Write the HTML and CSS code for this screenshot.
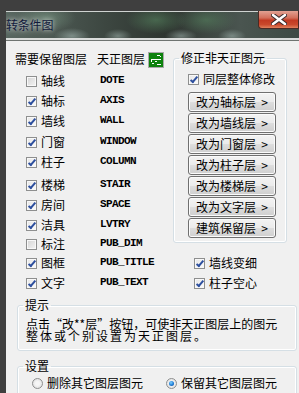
FILE: index.html
```html
<!DOCTYPE html>
<html lang="zh-CN">
<head>
    <meta charset="UTF-8">
    <title>转条件图</title>
    <link rel="stylesheet" href="styles.css">
</head>
<body>
    <div class="window">
        <div class="titlebar">
            <span class="title">转条件图</span>
            <span class="close">
                <svg width="16" height="11" viewBox="0 0 16 11">
                    <path d="M2 1 L14 10 M14 1 L2 10" stroke="#3a2a2a" stroke-width="4.5" stroke-linecap="round"/>
                    <path d="M2 1 L14 10 M14 1 L2 10" stroke="#ffffff" stroke-width="2.5" stroke-linecap="round"/>
                </svg>
            </span>
        </div>

        <div class="content">
            <div class="top">
                <!-- 左侧：需要保留的图层 -->
                <div class="layers">
                    <div class="head">
                        <span>需要保留图层</span>
                        <span class="tz">天正图层</span>
                        <svg class="tz-icon" width="16" height="16" viewBox="0 0 16 16">
                            <rect x="0.5" y="0.5" width="15" height="15" fill="#0d820d" stroke="#a9a9a9"/>
                            <rect x="9" y="3" width="3" height="1" fill="#fff"/>
                            <rect x="12" y="4" width="1" height="1" fill="#fff"/>
                            <rect x="3" y="7" width="10" height="1" fill="#fff"/>
                            <rect x="3" y="8" width="1" height="2" fill="#fff"/>
                            <rect x="7" y="9" width="2" height="1" fill="#fff"/>
                            <rect x="4" y="11" width="2" height="1" fill="#fff"/>
                            <rect x="9" y="12" width="4" height="1" fill="#fff"/>
                        </svg>
                    </div>
                    <div class="row"><span class="cb"></span><span class="lbl">轴线</span><span class="code">DOTE</span></div>
                    <div class="row"><span class="cb on"></span><span class="lbl">轴标</span><span class="code">AXIS</span></div>
                    <div class="row"><span class="cb on"></span><span class="lbl">墙线</span><span class="code">WALL</span></div>
                    <div class="row gap1"><span class="cb on"></span><span class="lbl">门窗</span><span class="code">WINDOW</span></div>
                    <div class="row"><span class="cb on"></span><span class="lbl">柱子</span><span class="code">COLUMN</span></div>
                    <div class="row gap3"><span class="cb on"></span><span class="lbl">楼梯</span><span class="code">STAIR</span></div>
                    <div class="row"><span class="cb on"></span><span class="lbl">房间</span><span class="code">SPACE</span></div>
                    <div class="row tight"><span class="cb on"></span><span class="lbl">洁具</span><span class="code">LVTRY</span></div>
                    <div class="row tight"><span class="cb"></span><span class="lbl">标注</span><span class="code">PUB_DIM</span></div>
                    <div class="row"><span class="cb on"></span><span class="lbl">图框</span><span class="code">PUB_TITLE</span></div>
                    <div class="row"><span class="cb on"></span><span class="lbl">文字</span><span class="code">PUB_TEXT</span></div>
                </div>

                <!-- 右侧：修正非天正图元 -->
                <div class="side">
                    <fieldset class="group fix">
                        <legend>修正非天正图元</legend>
                        <div class="row opt"><span class="cb on"></span><span>同层整体修改</span></div>
                        <div class="buttons">
                            <div class="btn"><span>改为轴标层</span><span>&gt;</span></div>
                            <div class="btn"><span>改为墙线层</span><span>&gt;</span></div>
                            <div class="btn"><span>改为门窗层</span><span>&gt;</span></div>
                            <div class="btn"><span>改为柱子层</span><span>&gt;</span></div>
                            <div class="btn"><span>改为楼梯层</span><span>&gt;</span></div>
                            <div class="btn"><span>改为文字层</span><span>&gt;</span></div>
                            <div class="btn"><span>建筑保留层</span><span>&gt;</span></div>
                        </div>
                    </fieldset>
                    <div class="extra">
                        <div class="row"><span class="cb on"></span><span class="lbl">墙线变细</span></div>
                        <div class="row"><span class="cb on"></span><span class="lbl">柱子空心</span></div>
                    </div>
                </div>
            </div>

            <fieldset class="group tip">
                <legend>提示</legend>
                <p>点击“改**层”按钮，可使非天正图层上的图元</p>
                <p class="wide">整体或个别设置为天正图层。</p>
            </fieldset>

            <fieldset class="group set">
                <legend>设置</legend>
                <div class="radios">
                    <div class="radio-item first"><span class="rb"></span><span>删除其它图层图元</span></div>
                    <div class="radio-item"><span class="rb on"></span><span>保留其它图层图元</span></div>
                </div>
            </fieldset>
        </div>
    </div>
</body>
</html>
```

FILE: styles.css
```css
html, body {
    margin: 0;
    height: 393px;
    overflow: hidden;
}
body {
    background: #3f3f3f;
    font-family: "Noto Sans CJK SC", "Liberation Sans", sans-serif;
    font-size: 12px;
    color: #000;
}
.window {
    margin: 11px 0 0 6px;
    width: 293px;
    height: 382px;
    overflow: hidden;
    background: #f0f0f0;
}

/* 标题栏 */
.titlebar {
    height: 26px;
    display: flex;
    align-items: flex-start;
    border-top: 1px solid #cfd3d1;
    border-bottom: 2px solid #dadcdb;
    box-shadow: 0 1px 0 #6f7471;
    margin-bottom: 1px;
    background:
        radial-gradient(ellipse 18px 8px at 66px 24px, rgba(170,190,185,0.55), transparent),
        radial-gradient(ellipse 14px 7px at 112px 24px, rgba(170,190,185,0.5), transparent),
        radial-gradient(ellipse 16px 7px at 175px 24px, rgba(170,190,185,0.5), transparent),
        radial-gradient(ellipse 14px 7px at 226px 24px, rgba(170,190,185,0.5), transparent),
        radial-gradient(ellipse 30px 14px at 40px 6px, rgba(120,150,130,0.6), transparent),
        radial-gradient(ellipse 30px 14px at 150px 8px, rgba(90,140,100,0.55), transparent),
        radial-gradient(ellipse 30px 14px at 200px 8px, rgba(90,140,100,0.5), transparent),
        linear-gradient(to right, #586660, #3c4640 35%, #2e3530 55%, #4a5550 80%, #3e4a44);
}
.title {
    line-height: 25px;
    color: #121a3c;
    text-shadow: 0 0 4px rgba(255,255,255,0.7), 0 0 8px rgba(255,255,255,0.5);
    letter-spacing: -0.2px;
}
.close {
    margin-left: auto;
    width: 39px;
    height: 17px;
    margin-top: -1px;
    border: 1px solid #4a2a24;
    border-top: none;
    border-radius: 0 0 0 4px;
    background: linear-gradient(to bottom, #e2a192 0%, #d3705c 40%, #c23a22 55%, #c9492c 80%, #e0805c 100%);
    display: flex;
    align-items: center;
    justify-content: center;
}

/* 内容区 */
.content {
    padding: 10px 0 0 9px;
}
.top {
    display: grid;
    grid-template-columns: 158px 114px;
}
.head {
    height: 16px;
    line-height: 16px;
    display: flex;
    align-items: flex-start;
}
.tz {
    margin-left: 10px;
}
.tz-icon {
    margin: 1px 0 0 3px;
}
.row {
    height: 20px;
    display: flex;
    align-items: flex-start;
    line-height: 20px;
}
.layers .head + .row {
    margin-top: 4px;
}
.layers .row .cb {
    margin-left: 11px;
}
.row.gap1 { margin-top: 1px; }
.row.gap3 { margin-top: 3px; }
.row.tight { height: 19px; }
.lbl {
    width: 59px;
}
.code {
    font-family: "Liberation Mono", monospace;
    font-weight: bold;
    font-size: 11px;
    letter-spacing: -0.6px;
    line-height: 18px;
}

/* 复选框 */
.cb {
    width: 11px;
    height: 11px;
    margin: 5px 4px 0 0;
    box-sizing: border-box;
    border: 1px solid #8e8f8f;
    background: linear-gradient(135deg, #d4d4d4, #f4f4f4);
    box-shadow: inset 0 0 0 1px #f8f8f8;
    position: relative;
    flex-shrink: 0;
}
.cb.on {
    background: linear-gradient(135deg, #e6e6e6, #fbfbfb);
}
.cb.on::after {
    content: "";
    position: absolute;
    left: 3px;
    top: 0px;
    width: 2px;
    height: 6px;
    border-right: 2px solid #2d4f9e;
    border-bottom: 2px solid #2d4f9e;
    transform: rotate(40deg);
}

/* 分组框 */
.group {
    box-sizing: border-box;
    margin: 0;
    border: 1px solid #d5dfe5;
    border-radius: 3px;
    box-shadow: inset 0 0 0 1px #fff;
    padding: 0 0 0 5px;
    min-width: 0;
}
.group legend {
    padding: 0 2px;
    line-height: 14px;
}
.fix {
    padding: 4px 0 3px 5px;
}
.fix .opt .cb {
    margin-left: 9px;
}
.buttons {
    margin: 3px 0 0 9px;
}
.btn {
    width: 88px;
    height: 20px;
    box-sizing: border-box;
    margin-bottom: 1px;
    border: 1px solid #707070;
    border-radius: 3px;
    background: linear-gradient(to bottom, #f3f3f3 0%, #ebebeb 48%, #dddddd 52%, #cfcfcf 100%);
    box-shadow: inset 0 0 0 1px #fbfbfb;
    display: flex;
    justify-content: space-between;
    align-items: center;
    padding: 0 7px 0 7px;
    line-height: 18px;
}
.extra {
    margin-top: 10px;
}
.extra .row .cb {
    margin-left: 21px;
}

.tip {
    width: 280px;
    margin: 5px 0 0 2px;
    padding: 6px 0 8px 5px;
}
.tip p {
    margin: 0 0 0 3px;
    line-height: 12px;
    white-space: nowrap;
}
.tip p.wide {
    letter-spacing: 2px;
}
.set {
    width: 280px;
    height: 60px;
    margin: 8px 0 0 2px;
}

/* 单选框 */
.radios {
    display: flex;
}
.radio-item {
    display: flex;
    height: 20px;
    line-height: 20px;
}
.radio-item.first {
    width: 143px;
}
.rb {
    width: 11px;
    height: 11px;
    margin: 5px 4px 0 9px;
    box-sizing: border-box;
    border: 1px solid #8e8f8f;
    border-radius: 50%;
    background: radial-gradient(circle, #f6f6f6 30%, #d6d6d6 100%);
    position: relative;
}
.radio-item + .radio-item .rb {
    margin-left: 0;
}
.rb.on::after {
    content: "";
    position: absolute;
    left: 2px;
    top: 2px;
    width: 5px;
    height: 5px;
    border-radius: 50%;
    background: radial-gradient(circle at 40% 35%, #7fd0ff, #1d7cd6 55%, #0a3f8a);
}
```
